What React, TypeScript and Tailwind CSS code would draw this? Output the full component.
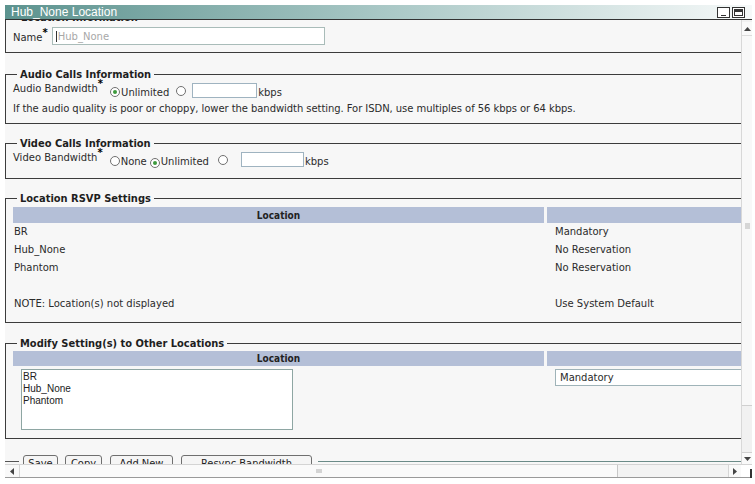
import React from "react";

const body = "font-['DejaVu_Sans',Verdana,sans-serif] text-[10px] text-[#2b2b2b]";

function Radio({ on }: { on?: boolean }) {
  return (
    <span className="inline-flex h-[10px] w-[10px] shrink-0 items-center justify-center rounded-full border border-[#707070] bg-white">
      {on && <span className="h-[4px] w-[4px] rounded-full bg-[#3d9a3d]" />}
    </span>
  );
}

function Req({ children }: { children: React.ReactNode }) {
  return (
    <span className="whitespace-nowrap">
      {children}
      <sup className="text-[10px] font-bold text-black">*</sup>
    </span>
  );
}

function Legend({ children }: { children: React.ReactNode }) {
  return (
    <legend className="ml-[4px] px-[3px] font-['DejaVu_Sans_Condensed','DejaVu_Sans',sans-serif] text-[11px] font-bold leading-[13px] text-[#1e1e1e]">
      {children}
    </legend>
  );
}

function Tri({ dir }: { dir: "up" | "down" | "left" | "right" }) {
  const pts = {
    up: "0,4 3.5,0 7,4",
    down: "0,0 7,0 3.5,4",
    left: "4,0 4,7 0,3.5",
    right: "0,0 0,7 4,3.5",
  }[dir];
  const w = dir === "up" || dir === "down" ? 7 : 4;
  const h = dir === "up" || dir === "down" ? 4 : 7;
  return (
    <svg width={w} height={h} viewBox={`0 0 ${w} ${h}`}>
      <polygon points={pts} fill="#444" />
    </svg>
  );
}

function TitleBar() {
  return (
    <div className="flex h-[14px] items-center justify-between bg-linear-to-r from-[#5c938f] via-[#a8c7c5] to-[#f6f9f9] pl-[6px] pr-[7px]">
      <span className="font-['Liberation_Sans',Arial,sans-serif] text-[12px] leading-[14px] text-white">Hub_None Location</span>
      <div className="flex gap-[2px]">
        <div className="flex h-[11px] w-[13px] items-end justify-center border border-[#333] bg-white pb-[1px]">
          <div className="h-px w-[5px] bg-[#333]" />
        </div>
        <div className="h-[11px] w-[13px] border border-[#333] bg-white p-[1px]">
          <div className="h-full w-full border border-t-[3px] border-[#333]" />
        </div>
      </div>
    </div>
  );
}

function VScroll() {
  return (
    <div className="flex w-[11px] flex-col border-l border-[#d8d8d8] bg-[#f1f1f1]">
      <div className="mt-[2px] flex h-[14px] items-center justify-center border-b border-[#dcdcdc] bg-[#f9f9f9]">
        <Tri dir="up" />
      </div>
      <div className="flex h-[370px] flex-col items-center border-b border-[#d0d0d0] bg-[#f8f8f8]">
        <div className="mt-[187px] h-[6px] w-[5px] bg-[#d6d6d6]" />
      </div>
      <div className="flex-1" />
      <div className="flex h-[12px] items-center justify-center border-t border-[#d0d0d0] bg-[#f9f9f9]">
        <Tri dir="down" />
      </div>
    </div>
  );
}

function HScroll() {
  return (
    <div className="flex h-[14px] border-t border-[#d4d4d4] border-b border-b-[#9a9a9a]">
      <div className="flex flex-1 bg-[#f3f3f3]">
        <div className="flex w-[15px] items-center justify-center border-r border-[#d6d6d6] bg-[#f9f9f9]">
          <Tri dir="left" />
        </div>
        <div className="flex w-[598px] items-center justify-center border-r border-[#c8c8c8] bg-[#fafafa]">
          <div className="h-[4px] w-[6px] bg-[#d4d4d4]" />
        </div>
        <div className="flex-1" />
        <div className="flex w-[13px] items-center justify-center border-l border-[#d6d6d6] bg-[#f9f9f9]">
          <Tri dir="right" />
        </div>
      </div>
      <div className="flex w-[11px] justify-end bg-white">
        <div className="mt-[4px] h-[9px] w-[2px] bg-[#333]" />
      </div>
    </div>
  );
}

const rsvp = [
  ["BR", "Mandatory"],
  ["Hub_None", "No Reservation"],
  ["Phantom", "No Reservation"],
  ["", ""],
  ["NOTE: Location(s) not displayed", "Use System Default"],
];

function Content() {
  return (
    <div className={`flex w-[800px] flex-col ${body}`}>
      {/* Location Information (scrolled past its legend) */}
      <div className="h-[33px] border-b border-l border-[#3c3c3c] pl-[7px]">
        <div className="-mt-[8px] ml-[8px] font-['DejaVu_Sans_Condensed','DejaVu_Sans',sans-serif] text-[11px] font-bold leading-[12px] text-[#1e1e1e]">
          Location Information
        </div>
        <div className="mt-[3px] flex items-start">
          <div className="pt-[3px]">
            <Req>Name</Req>
          </div>
          <div className="ml-[4px] flex h-[18px] w-[273px] items-center border border-[#a9bcb9] bg-white pl-[3px]">
            <span className="h-[11px] w-px bg-[#333]" />
            <span className="ml-px text-[#a8a8a8]">Hub_None</span>
          </div>
        </div>
      </div>

      {/* Audio */}
      <fieldset className="mt-[15px] h-[56px] border border-r-0 border-[#3c3c3c] pl-[7px]">
        <Legend>Audio Calls Information</Legend>
        <div className="mt-[2px] flex h-[15px] items-center">
          <span className="mb-[5px]">
            <Req>Audio Bandwidth</Req>
          </span>
          <span className="ml-[7px] mt-[3px] flex items-center">
            <Radio on />
            <span className="ml-[1px]">Unlimited</span>
            <span className="ml-[7px]">
              <Radio />
            </span>
          </span>
          <span className="ml-[6px] h-[15px] w-[65px] border border-[#9fb3c0] bg-white" />
          <span className="ml-[1px] mt-[3px]">kbps</span>
        </div>
        <div className="mt-[4px] leading-[13px] tracking-[-0.06px]">
          If the audio quality is poor or choppy, lower the bandwidth setting. For ISDN, use multiples of 56 kbps or 64 kbps.
        </div>
      </fieldset>

      {/* Video */}
      <fieldset className="mt-[13px] h-[42px] border border-r-0 border-[#3c3c3c] pl-[7px]">
        <Legend>Video Calls Information</Legend>
        <div className="mt-[2px] flex h-[15px] items-center">
          <span className="mb-[5px]">
            <Req>Video Bandwidth</Req>
          </span>
          <span className="ml-[7px] mt-[3px] flex items-center">
            <Radio />
            <span className="ml-px">None</span>
            <span className="ml-[3px]">
              <Radio on />
            </span>
            <span className="ml-px">Unlimited</span>
            <span className="ml-[9px]">
              <Radio />
            </span>
          </span>
          <span className="ml-[13px] h-[15px] w-[63px] border border-[#9fb3c0] bg-white" />
          <span className="ml-[1px] mt-[3px]">kbps</span>
        </div>
      </fieldset>

      {/* RSVP */}
      <fieldset className="mt-[13px] h-[131px] border border-r-0 border-[#3c3c3c] pl-[7px]">
        <Legend>Location RSVP Settings</Legend>
        <div className="mt-[2px] grid grid-cols-[531px_1fr] gap-x-[3px]">
          <div className="flex h-[16px] items-center justify-center bg-[#b4bfd7] font-['DejaVu_Sans_Condensed','DejaVu_Sans',sans-serif] font-bold text-[#222]">
            Location
          </div>
          <div className="h-[16px] bg-[#b4bfd7]" />
          {rsvp.map(([loc, val], i) => (
            <React.Fragment key={i}>
              <div className="h-[18px] pl-px leading-[18px]">{loc}</div>
              <div className="h-[18px] pl-[8px] leading-[18px]">{val}</div>
            </React.Fragment>
          ))}
        </div>
      </fieldset>

      {/* Modify */}
      <fieldset className="mt-[14px] h-[102px] border border-r-0 border-[#3c3c3c] pl-[7px]">
        <Legend>Modify Setting(s) to Other Locations</Legend>
        <div className="mt-[1px] grid grid-cols-[531px_1fr] gap-x-[3px]">
          <div className="flex h-[15px] items-center justify-center bg-[#b4bfd7] font-['DejaVu_Sans_Condensed','DejaVu_Sans',sans-serif] font-bold text-[#222]">
            Location
          </div>
          <div className="h-[15px] bg-[#b4bfd7]" />
          <div className="pt-[3px]">
            <div className="ml-[8px] h-[61px] w-[272px] border border-[#8ea6a3] bg-white pl-[1px] pt-px font-['Liberation_Sans',Arial,sans-serif] text-[10px] leading-[12px] text-[#222]">
              <div>BR</div>
              <div>Hub_None</div>
              <div>Phantom</div>
            </div>
          </div>
          <div className="pt-[3px]">
            <div className="ml-[8px] flex h-[17px] items-center border border-[#9fb3b8] bg-white pl-[4px]">Mandatory</div>
          </div>
        </div>
      </fieldset>

      {/* Buttons */}
      <div className="mt-[16px] flex items-start">
        <div className="mt-[6px] h-px w-[14px] bg-[#555]" />
        {[
          ["Save", "ml-[4px] w-[35px]"],
          ["Copy", "ml-[7px] w-[37px]"],
          ["Add New", "ml-[8px] w-[63px]"],
          ["Resync Bandwidth", "ml-[8px] w-[131px]"],
        ].map(([t, c]) => (
          <button
            key={t}
            className={`${c} h-[20px] rounded-[3px] border border-[#6f6f6f] bg-[#f5f5f5] pb-[4px] text-center font-['DejaVu_Sans_Condensed','DejaVu_Sans',sans-serif] text-[11px] leading-[13px] text-[#222]`}
          >
            {t}
          </button>
        ))}
        <div className="ml-[6px] mt-[6px] h-px flex-1 bg-[#6b8b88]" />
      </div>
    </div>
  );
}

export default function App() {
  return (
    <div className="h-[484px] w-[755px] overflow-hidden bg-white pl-[5px] pt-[5px]">
      <div className="flex h-[473px] w-[747px] flex-col">
        <TitleBar />
        <div className="h-px bg-[#333]" />
        <div className="flex min-h-0 flex-1">
          <div className="min-w-0 flex-1 overflow-hidden bg-[#f7f7f7]">
            <Content />
          </div>
          <VScroll />
        </div>
        <HScroll />
      </div>
    </div>
  );
}
